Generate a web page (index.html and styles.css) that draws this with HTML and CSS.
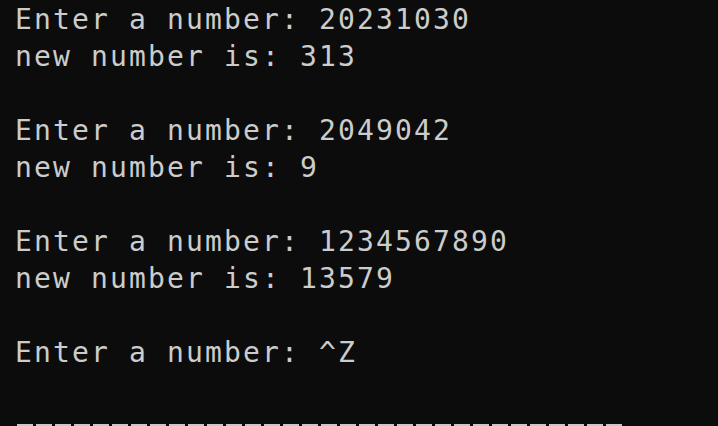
FILE: index.html
```html
<!DOCTYPE html>
<html>
<head>
<meta charset="utf-8">
<link rel="stylesheet" href="styles.css">
</head>
<body>
<div class="console">
<div class="line">Enter a number: 20231030</div>
<div class="line">new number is: 313</div>
<div class="line"></div>
<div class="line">Enter a number: 2049042</div>
<div class="line">new number is: 9</div>
<div class="line"></div>
<div class="line">Enter a number: 1234567890</div>
<div class="line">new number is: 13579</div>
<div class="line"></div>
<div class="line">Enter a number: ^Z</div>
</div>
<div class="bar">
<span></span><span></span><span></span><span></span><span></span><span></span><span></span><span></span>
<span></span><span></span><span></span><span></span><span></span><span></span><span></span><span></span>
<span></span><span></span><span></span><span></span><span></span><span></span><span></span><span></span>
<span></span><span></span><span></span><span></span><span></span><span></span><span></span><span></span>
</div>
</body>
</html>
```
FILE: styles.css
```css
html, body {
  margin: 0;
  padding: 0;
  background: #0c0c0c;
  height: 100%;
  overflow: hidden;
}
body {
  display: flex;
  flex-direction: column;
}
.console {
  padding: 1px 0 0 15px;
  font-family: "DejaVu Sans Mono", monospace;
  font-size: 28px;
  letter-spacing: 2.14px;
  line-height: 37px;
  color: #cccccc;
  flex: 1;
  min-height: 0;
}
.line {
  height: 37px;
  white-space: pre;
}
.bar {
  display: flex;
  gap: 3px;
  padding-left: 17px;
  height: 2px;
  flex: none;
}
.bar span {
  width: 16px;
  height: 2px;
  background: #c8c8c8;
}
```
